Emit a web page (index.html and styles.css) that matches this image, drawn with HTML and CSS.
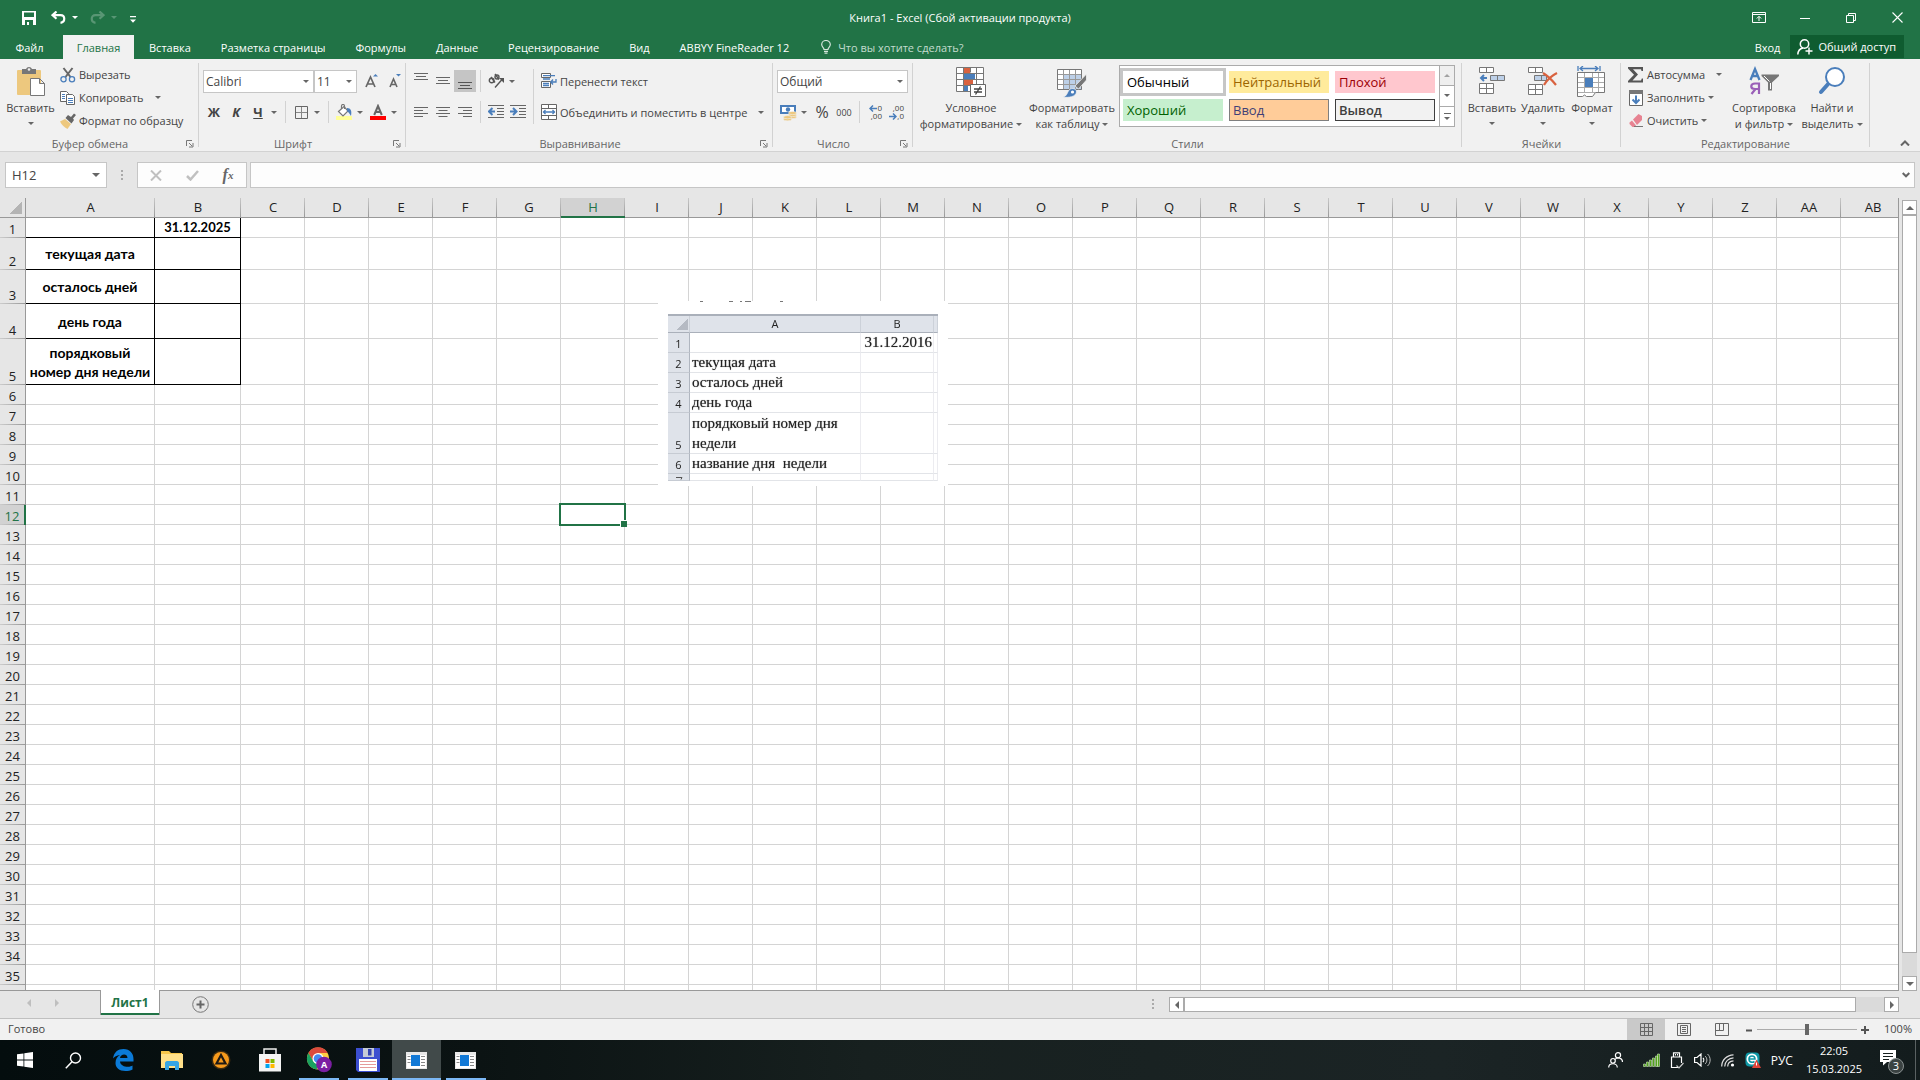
FILE: index.html
```html
<!DOCTYPE html>
<html lang="ru">
<head>
    <meta charset="UTF-8">
    <meta name="viewport" content="width=device-width, initial-scale=1.0">
    <title>Книга1 - Excel</title>
    <link rel="stylesheet" href="styles.css">
</head>
<body>
    <header class="titlebar">
        <div class="quick">
            <button class="quick-btn" aria-label="Сохранить"><svg width="14" height="14" viewBox="0 0 14 14"><path fill="#fff" fill-rule="evenodd" d="M0 0h14v14H0zM2 1.500v4.500h10V1.500zM3 9v5h2v-3h2v3h4V9z"/></svg></button>
            <button class="quick-btn" aria-label="Отменить"><svg width="15" height="13" viewBox="0 0 15 13"><path fill="none" stroke="#fff" stroke-width="2.200" d="M5.500 0.500L1.500 4.200l4 3.600M2 4.200h7.500c5 0 5 7 0 7.600"/></svg></button>
            <span class="caret light"></span>
            <button class="quick-btn faded" aria-label="Вернуть"><svg width="15" height="13" viewBox="0 0 15 13"><path fill="none" stroke="#fff" stroke-width="2.200" d="M9.500 0.500l4 3.700-4 3.600M13 4.200H5.500c-5 0-5 7 0 7.600"/></svg></button>
            <span class="caret light faded"></span>
            <button class="quick-btn custom" aria-label="Настройка панели"><svg width="6" height="7" viewBox="0 0 6 7"><path fill="#fff" d="M0 0h6v1.300H0zM0 3.500h6L3 6.800z"/></svg></button>
        </div>
        <h1 class="title">Книга1 - Excel (Сбой активации продукта)</h1>
        <div class="window-buttons">
            <button aria-label="Параметры ленты"><svg width="14" height="11" viewBox="0 0 14 11"><path fill="none" stroke="#fff" d="M.5.5h13v10H.5zM.5 2.500h13M7 9V4.500M4.800 6.500L7 4.300l2.200 2.200"/></svg></button>
            <button aria-label="Свернуть"><svg width="10" height="10" viewBox="0 0 10 10"><path stroke="#fff" d="M0 5.500h10"/></svg></button>
            <button aria-label="Восстановить"><svg width="10" height="10" viewBox="0 0 10 10"><path fill="none" stroke="#fff" d="M.5 2.500h7v7h-7zM2.500 2.500v-2h7v7h-2"/></svg></button>
            <button aria-label="Закрыть"><svg width="11" height="11" viewBox="0 0 11 11"><path stroke="#fff" stroke-width="1.100" d="M.5.5l10 10M10.500.5l-10 10"/></svg></button>
        </div>
    </header>

    <nav class="tabs">
        <button class="tab file">Файл</button>
        <button class="tab active">Главная</button>
        <button class="tab">Вставка</button>
        <button class="tab">Разметка страницы</button>
        <button class="tab">Формулы</button>
        <button class="tab">Данные</button>
        <button class="tab">Рецензирование</button>
        <button class="tab">Вид</button>
        <button class="tab">ABBYY FineReader 12</button>
        <button class="tell-me"><svg width="10" height="14" viewBox="0 0 10 14"><path fill="none" stroke="#d5e6dc" stroke-width="1.200" d="M3 9.500C3 7.500.700 7 .700 4.500a4.300 4 0 0 1 8.600 0C9.300 7 7 7.500 7 9.500zM3 11.300h4M3.500 13.200h3"/></svg>Что вы хотите сделать?</button>
        <button class="login">Вход</button>
        <button class="share"><svg width="16" height="16" viewBox="0 0 16 16"><circle cx="7.500" cy="5" r="4.200" fill="none" stroke="#fff" stroke-width="1.500"/><path fill="none" stroke="#fff" stroke-width="1.500" d="M.8 15.500C1 11.500 3.500 9.500 6 9M12 8.500v7M8.500 12h7"/></svg>Общий доступ</button>
    </nav>

    <section class="ribbon">
        <div class="group clipboard">
            <div class="group-body">
                <button class="big paste">
                    <svg width="30" height="32" viewBox="0 0 30 32"><rect x="1" y="4" width="24" height="25" rx="1" fill="#edc87e"/><path fill="#777" d="M6 3h4a3.200 3.200 0 0 1 6 0h4v5H6z"/><circle cx="13" cy="3.500" r="1.300" fill="#f1f1f1"/><path fill="#fff" stroke="#777" d="M14.500 12.500h9l5 5v12h-14zM23.500 12.500v5h5"/></svg>
                    <span>Вставить</span><span class="caret"></span>
                </button>
                <div class="small-list">
                    <button class="small"><svg width="16" height="16" viewBox="0 0 16 16"><path fill="none" stroke="#666" stroke-width="2" d="M3.500 1l7 9M12.500 1l-7 9"/><circle cx="3.500" cy="12.200" r="2.600" fill="none" stroke="#4a7ebb" stroke-width="1.300"/><circle cx="12" cy="12.200" r="2.600" fill="none" stroke="#4a7ebb" stroke-width="1.300"/></svg>Вырезать</button>
                    <button class="small"><svg width="16" height="16" viewBox="0 0 16 16"><path fill="#fff" stroke="#666" d="M.5 1.500h6l2 2v8h-8z"/><path fill="#fff" stroke="#666" d="M6.500 4.500h6l2 2v8h-8z"/><path stroke="#4a7ebb" d="M2 4.500h3M2 6.500h3M2 8.500h3M8 8.500h5M8 10.500h5M8 12.500h5"/></svg>Копировать<span class="caret apart"></span></button>
                    <button class="small"><svg width="16" height="16" viewBox="0 0 16 16"><path fill="#edc87e" d="M0 8.500l5-2.500 6 5-3.500 5C4 14 1.500 12 0 8.500z"/><path fill="#666" d="M5.500 5l2.500-3 3 2 3-3.500 2 1.500-3 3.500 1 1.500-2.500 3.500z"/></svg>Формат по образцу</button>
                </div>
            </div>
            <div class="group-name"><span>Буфер обмена</span><svg class="launcher" width="8" height="8"><use href="#launcher"/></svg></div>
        </div>

        <div class="group font">
            <div class="group-body rows">
                <div class="row">
                    <label class="combo family"><select aria-label="Шрифт"><option>Calibri</option></select><span class="caret"></span></label>
                    <label class="combo size"><select aria-label="Размер шрифта"><option>11</option></select><span class="caret"></span></label>
                    <button class="mini grow" aria-label="Увеличить размер"><svg width="16" height="16" viewBox="0 0 16 16"><path fill="none" stroke="#666" stroke-width="1.700" d="M1 14L5.500 4l4.500 10M2.600 11h6"/><path fill="#4a7ebb" d="M8 3.500h5L10.500 1z"/></svg></button>
                    <button class="mini" aria-label="Уменьшить размер"><svg width="16" height="16" viewBox="0 0 16 16"><path fill="none" stroke="#666" stroke-width="1.600" d="M3 14l3.500-8L10 14M4.300 11.500h4.500"/><path fill="#4a7ebb" d="M9 1h5l-2.500 2.500z"/></svg></button>
                </div>
                <div class="row">
                    <button class="mini bold">Ж</button>
                    <button class="mini bold italic">К</button>
                    <button class="mini bold underline">Ч</button><button class="drop" aria-label="Подчеркивание"><span class="caret"></span></button>
                    <span class="sep"></span>
                    <button class="mini" aria-label="Границы"><svg width="13" height="13" viewBox="0 0 13 13"><path fill="none" stroke="#666" d="M.5.500h12v12H.5z"/><path stroke="#888" d="M6.500 1v11M1 6.500h11"/></svg></button><button class="drop" aria-label="Виды границ"><span class="caret"></span></button>
                    <span class="sep"></span>
                    <button class="mini" aria-label="Цвет заливки"><svg width="16" height="16" viewBox="0 0 16 16"><path fill="#ffff99" d="M0 12h16v4H0z"/><path fill="#fff" stroke="#777" stroke-width="1.200" d="M2.500 7.500L8 2.500l4 4.500-5 5z"/><path fill="none" stroke="#777" stroke-width="1.200" d="M5.500 5V2c0-2 3-2 3 0v3"/><path fill="#4a7ebb" d="M11 4c4 0 5 3 4 8-1-2-2-3-4-5z"/></svg></button><button class="drop" aria-label="Заливка"><span class="caret"></span></button>
                    <button class="mini color" aria-label="Цвет текста"><svg width="16" height="16" viewBox="0 0 16 16"><path fill="red" d="M0 12h16v4H0z"/><path fill="none" stroke="#666" stroke-width="2" d="M4.200 11L8 2l3.800 9M5.500 8h5"/></svg></button><button class="drop" aria-label="Цвета текста"><span class="caret"></span></button>
                </div>
            </div>
            <div class="group-name"><span>Шрифт</span><svg class="launcher" width="8" height="8"><use href="#launcher"/></svg></div>
        </div>

        <div class="group align">
            <div class="group-body">
                <div class="rows">
                    <div class="row">
                        <button class="mini" aria-label="По верхнему краю"><svg width="14" height="16" viewBox="0 0 14 16"><path stroke="#666" d="M0 .5h14M2 3.500h10M0 6.500h14"/></svg></button>
                        <button class="mini" aria-label="По середине"><svg width="14" height="16" viewBox="0 0 14 16"><path stroke="#666" d="M0 4.500h14M2 7.500h10M0 10.500h14"/></svg></button>
                        <button class="mini pressed" aria-label="По нижнему краю"><svg width="14" height="16" viewBox="0 0 14 16"><path stroke="#555" d="M0 9.500h14M2 12.500h10M0 15.500h14"/></svg></button>
                        <span class="sep near"></span>
                        <button class="mini" aria-label="Ориентация"><svg width="16" height="16" viewBox="0 0 16 16"><g fill="none" stroke="#555" stroke-width="1.400"><circle cx="3.600" cy="7.500" r="2.300"/><path d="M3 4l4 5.500M7 1l4 5.500M7 14.500L14.500 6"/><circle cx="9" cy="4" r="2"/></g><path fill="#555" d="M11 5h5v5z"/></svg></button><button class="drop" aria-label="Поворот"><span class="caret"></span></button>
                    </div>
                    <div class="row">
                        <button class="mini" aria-label="По левому краю"><svg width="14" height="13" viewBox="0 0 14 13"><path stroke="#666" d="M0 1.500h14M0 4.500h9M0 7.500h14M0 10.500h9"/></svg></button>
                        <button class="mini" aria-label="По центру"><svg width="14" height="13" viewBox="0 0 14 13"><path stroke="#666" d="M0 1.500h14M2.500 4.500h9M0 7.500h14M2.500 10.500h9"/></svg></button>
                        <button class="mini" aria-label="По правому краю"><svg width="14" height="13" viewBox="0 0 14 13"><path stroke="#666" d="M0 1.500h14M5 4.500h9M0 7.500h14M5 10.500h9"/></svg></button>
                        <span class="sep near"></span>
                        <button class="mini" aria-label="Уменьшить отступ"><svg width="16" height="14" viewBox="0 0 16 14"><path stroke="#666" d="M0 .5h16M9 3.500h7M9 6.500h7M9 9.500h7M0 12.500h16"/><path fill="none" stroke="#4a7ebb" stroke-width="2" d="M7 6.500H1.500M4.500 3L1 6.500 4.500 10"/></svg></button>
                        <button class="mini" aria-label="Увеличить отступ"><svg width="16" height="14" viewBox="0 0 16 14"><path stroke="#666" d="M0 .5h16M9 3.500h7M9 6.500h7M9 9.500h7M0 12.500h16"/><path fill="none" stroke="#4a7ebb" stroke-width="2" d="M0 6.500h5.500M3 3l3.500 3.500L3 10"/></svg></button>
                    </div>
                </div>
                <span class="sep tall"></span>
                <div class="rows">
                    <button class="small wide"><svg width="16" height="16" viewBox="0 0 16 16"><path fill="#fff" stroke="#666" d="M.5.500h9v4h-9zM.5 8.500h9v6h-9z"/><path stroke="#4a7ebb" stroke-width="1.300" fill="none" d="M2 2.700h12M2 6h7M2 10.500h6M2 12.500h6M15 6v3h-5M12 6.500L9.800 9l2.200 2.500"/></svg>Перенести текст</button>
                    <button class="small wide"><svg width="16" height="16" viewBox="0 0 16 16"><path fill="#fff" stroke="#666" d="M.5.500h15v15H.5zM.5 4.500h15M.5 11.500h15M7.500.500v4M7.500 11.500v4"/><path fill="none" stroke="#4a7ebb" stroke-width="1.300" d="M2 8h12M4.500 6L2.500 8l2 2M11.500 6l2 2-2 2"/></svg>Объединить и поместить в центре<span class="caret apart"></span></button>
                </div>
            </div>
            <div class="group-name"><span>Выравнивание</span><svg class="launcher" width="8" height="8"><use href="#launcher"/></svg></div>
        </div>

        <div class="group number">
            <div class="group-body rows">
                <div class="row">
                    <label class="combo format"><select aria-label="Числовой формат"><option>Общий</option></select><span class="caret"></span></label>
                </div>
                <div class="row">
                    <button class="mini" aria-label="Финансовый формат"><svg width="17" height="17" viewBox="0 0 17 17"><path fill="#fff" stroke="#4a7ebb" stroke-width="2" d="M1 2h14v7H1z"/><circle cx="8" cy="5.500" r="2.200" fill="#4a7ebb"/><g fill="#edc87e" stroke="#f1f1f1" stroke-width=".6"><ellipse cx="12.500" cy="13" rx="4" ry="1.600"/><ellipse cx="12.500" cy="11" rx="4" ry="1.600"/><ellipse cx="12.500" cy="9" rx="4" ry="1.600"/><ellipse cx="7.500" cy="15.200" rx="4" ry="1.600"/><ellipse cx="7.500" cy="13.200" rx="4" ry="1.600"/></g></svg></button><button class="drop" aria-label="Валюта"><span class="caret"></span></button>
                    <button class="mini percent">%</button>
                    <button class="mini zeros">000</button>
                    <span class="sep near"></span>
                    <button class="mini decimals" aria-label="Увеличить разрядность"><span class="dec-row"><svg width="8" height="7" viewBox="0 0 8 7"><path fill="none" stroke="#4a7ebb" stroke-width="1.500" d="M8 3.500H1M4 .5l-3 3 3 3"/></svg>0</span><span class="dec-row">,00</span></button>
                    <button class="mini decimals" aria-label="Уменьшить разрядность"><span class="dec-row">,00</span><span class="dec-row"><svg width="8" height="7" viewBox="0 0 8 7"><path fill="none" stroke="#4a7ebb" stroke-width="1.500" d="M0 3.500h7M4 .5l3 3-3 3"/></svg>,0</span></button>
                </div>
            </div>
            <div class="group-name"><span>Число</span><svg class="launcher" width="8" height="8"><use href="#launcher"/></svg></div>
        </div>

        <div class="group styles">
            <div class="group-body">
                <button class="big cond">
                    <svg width="30" height="32" viewBox="0 0 30 32"><path fill="#fff" d="M0 1h28v24H0z"/><path fill="#d9623f" d="M8 1h6v6H8zM8 13h9v6H8z"/><path fill="#4a7ebb" d="M8 7h11v6H8zM8 19h4v6H8z"/><path fill="none" stroke="#777" d="M.5 1.500h27v24H.5zM.5 7.500h27M.5 13.500h27M.5 19.500h27M7.500 1.500v24M20.500 1.500v24M14.500 1.500v5"/><path fill="#fff" stroke="#666" d="M14.500 18.500h15v12h-15z"/><path fill="none" stroke="#444" stroke-width="1.300" d="M18 23h8M18 26h8M24.500 20.500l-5 8"/></svg>
                    <span>Условное</span><span class="line">форматирование<span class="caret"></span></span>
                </button>
                <button class="big table">
                    <svg width="30" height="32" viewBox="0 0 30 32"><path fill="#fff" d="M0 4h25v20H0z"/><path fill="#bdd0e8" d="M7 9h18v15H7z"/><path fill="none" stroke="#999" d="M.5 8.500h24M.5 13.500h24M.5 18.500h24M6.500 3.500v20M12.500 3.500v20M18.500 3.500v20"/><path fill="none" stroke="#777" d="M.5 3.500h24v20H.5z"/><path fill="#777" d="M29.500 8v6l-8 9-3.500-3z" stroke="#f1f1f1" stroke-width=".8"/><path fill="#4a7ebb" stroke="#f1f1f1" stroke-width=".8" d="M6 31c4-1 4-4 6-7 3-3 8-1 7.500 2C19 31 11 32 6 31z"/><circle cx="15.500" cy="26" r="1.600" fill="#fff"/></svg>
                    <span>Форматировать</span><span class="line">как таблицу<span class="caret"></span></span>
                </button>
                <div class="gallery">
                    <div class="swatches">
                        <button class="swatch normal">Обычный</button>
                        <button class="swatch neutral">Нейтральный</button>
                        <button class="swatch bad">Плохой</button>
                        <button class="swatch good">Хороший</button>
                        <button class="swatch input">Ввод</button>
                        <button class="swatch output">Вывод</button>
                    </div>
                    <div class="gallery-scroll">
                        <button class="off" aria-label="Вверх"><span class="caret up"></span></button>
                        <button aria-label="Вниз"><span class="caret"></span></button>
                        <button class="more" aria-label="Еще"><span class="caret"></span></button>
                    </div>
                </div>
            </div>
            <div class="group-name"><span>Стили</span></div>
        </div>

        <div class="group cells">
            <div class="group-body">
                <button class="big insert">
                    <svg width="28" height="32" viewBox="0 0 28 32"><path fill="#fff" stroke="#777" d="M1.500 1.500h14v5h-14zM8.500 1.500v5M1.500 17.500h14v10h-14zM8.500 17.500v10M1.500 22.500h14"/><path fill="#bdd0e8" stroke="#777" d="M12.500 9.500h14v5h-14zM19.500 9.500v5"/><path fill="none" stroke="#4a7ebb" stroke-width="2" d="M9 12H3M6 9l-3 3 3 3"/></svg>
                    <span>Вставить</span><span class="caret"></span>
                </button>
                <button class="big delete">
                    <svg width="30" height="32" viewBox="0 0 30 32"><path fill="#fff" stroke="#777" d="M.5 1.500h14v5H.5zM7.500 1.500v5M.5 18.500h14v10H.5zM7.500 18.500v10M.5 23.500h14"/><path fill="#bdd0e8" stroke="#777" d="M6.500 9.500h12v5h-12zM13.500 9.500v5"/><path fill="none" stroke="#d9623f" stroke-width="2.200" d="M15 7c5 3 9 7 13 12M29 7c-6 3-10 7-13 12"/></svg>
                    <span>Удалить</span><span class="caret"></span>
                </button>
                <button class="big format">
                    <svg width="30" height="32" viewBox="0 0 30 32"><path fill="none" stroke="#4a7ebb" stroke-width="1.300" d="M1 0v5M23 0v5M3 2.500h18M6 0L3 2.500 6 5M18 0l3 2.500L18 5"/><path fill="#fff" stroke="#777" d="M.5 6.500h27v20h-9l-3 4h-6l-2-1.500-2 1.500h-5z"/><path fill="none" stroke="#aaa" d="M1 11.500h26M1 21.500h26M7.500 7v20M15.500 7v20M21.500 7v19M1 16.500h26M1 26.500h17"/><path fill="#4a7ebb" d="M8 12h8v9H8z"/></svg>
                    <span>Формат</span><span class="caret"></span>
                </button>
            </div>
            <div class="group-name"><span>Ячейки</span></div>
        </div>

        <div class="group editing">
            <div class="group-body">
                <div class="small-list">
                    <button class="small"><svg width="16" height="16" viewBox="0 0 16 16"><path fill="#555" d="M0 0h15v4h-1.500l-.5-1.700H5l5 5.200-5.500 6H13l.8-2H15V15.500H0V14l6-6.300L0 1.500z"/></svg>Автосумма<span class="caret apart"></span></button>
                    <button class="small"><svg width="16" height="16" viewBox="0 0 16 16"><path fill="#fff" stroke="#666" d="M1.500.5h13v15h-13z"/><path fill="#777" d="M1 0h14v4H1z"/><path fill="none" stroke="#4a7ebb" stroke-width="2" d="M8 5.500v8M4.500 9.500L8 13l3.500-3.500"/></svg>Заполнить<span class="caret"></span></button>
                    <button class="small"><svg width="16" height="16" viewBox="0 0 16 16"><path fill="#e78392" d="M5 6.500L10.500 1l3.500 2v4l-5 5z"/><path fill="#e78392" d="M4 7.500l4 5-1.500 1.500h-2L1.500 11V9.500z"/><path stroke="#777" d="M6 13.500h9"/></svg>Очистить<span class="caret"></span></button>
                </div>
                <button class="big sort">
                    <svg width="30" height="32" viewBox="0 0 30 32"><path fill="none" stroke="#4a7ebb" stroke-width="2.300" d="M1.500 14L6 3l4.500 11M3 10h6"/><path fill="none" stroke="#9a5fb8" stroke-width="2.200" d="M10 28V17.500H6c-5 0-5 5.500 0 5.500h4M6.500 23L2.500 28"/><path fill="#777" d="M12.500 8.500H30v1.500l-7 6.500v8h-4v-8l-6.500-6.500z"/><path stroke="#fff" d="M21.500 17v6M15 10l5.500 5.500"/></svg>
                    <span>Сортировка</span><span class="line">и фильтр<span class="caret"></span></span>
                </button>
                <button class="big find">
                    <svg width="30" height="32" viewBox="0 0 30 32"><path stroke="#4a7ebb" stroke-width="4" stroke-linecap="round" d="M4 26l8-9"/><circle cx="18" cy="11" r="9" fill="#fff" stroke="#4a7ebb" stroke-width="2"/></svg>
                    <span>Найти и</span><span class="line">выделить<span class="caret"></span></span>
                </button>
            </div>
            <div class="group-name"><span>Редактирование</span></div>
        </div>
        <button class="collapse" aria-label="Свернуть ленту"><svg width="10" height="6" viewBox="0 0 10 6"><path fill="none" stroke="#666" stroke-width="2" d="M1 5.500l4-4 4 4"/></svg></button>
    </section>

    <section class="formula-bar">
        <div class="name-box"><input type="text" value="H12" aria-label="Имя"><span class="caret wide"></span></div>
        <span class="dots"></span>
        <div class="formula-buttons">
            <button aria-label="Отмена"><svg width="12" height="11" viewBox="0 0 12 11"><path stroke="#c0c0c0" stroke-width="2" d="M1 .5l10 10M11 .5l-10 10"/></svg></button>
            <button aria-label="Ввод"><svg width="13" height="11" viewBox="0 0 13 11"><path fill="none" stroke="#c0c0c0" stroke-width="2.500" d="M1 6l3.500 3.500L12 1"/></svg></button>
            <button class="fx" aria-label="Вставить функцию"><i>f</i><sub>x</sub></button>
        </div>
        <div class="formula"><input type="text" aria-label="Строка формул"><svg width="8" height="6" viewBox="0 0 8 6"><path fill="none" stroke="#666" stroke-width="2" d="M.7 1L4 4.300 7.300 1"/></svg></div>
    </section>

    <main class="workspace">
        <div class="sheet">
            <table class="grid" id="grid"></table>
            <div class="picture">
                <svg class="scraps" width="90" height="2" viewBox="0 0 90 2"><path stroke="#777" d="M2 .5h3M31 .5h4M42 .5h2M47 .5h6M82 .5h3"/></svg>
                <div class="picture-page">
                    <div class="p-bar"></div>
                    <table class="p-table">
                        <tr class="p-head"><th><span class="corner-mark"></span></th><th>A</th><th>B</th><th></th></tr>
                        <tr><th>1</th><td></td><td class="p-date">31.12.2016</td><td></td></tr>
                        <tr><th>2</th><td>текущая дата</td><td></td><td></td></tr>
                        <tr><th>3</th><td>осталось дней</td><td></td><td></td></tr>
                        <tr><th>4</th><td>день года</td><td></td><td></td></tr>
                        <tr><th>5</th><td>порядковый номер дня недели</td><td></td><td></td></tr>
                        <tr><th>6</th><td>название дня&nbsp; недели</td><td></td><td></td></tr>
                        <tr class="p-last"><th><svg width="22" height="3" viewBox="0 0 22 3"><path fill="none" stroke="#555" d="M8 .5h6l-1 2"/></svg></th><td></td><td></td><td></td></tr>
                    </table>
                </div>
            </div>
        </div>
        <div class="vscroll">
            <button aria-label="Прокрутить вверх"><span class="caret up wide"></span></button>
            <div class="track"><div class="thumb"></div></div>
            <button aria-label="Прокрутить вниз"><span class="caret wide"></span></button>
        </div>
    </main>

    <section class="sheet-tabs">
        <div class="sheet-nav">
            <button aria-label="Назад"><span class="side left"></span></button>
            <button aria-label="Вперед"><span class="side right"></span></button>
        </div>
        <button class="sheet-tab">Лист1</button>
        <button class="add-sheet" aria-label="Новый лист"><svg width="17" height="17" viewBox="0 0 17 17"><circle cx="8.500" cy="8.500" r="7.800" fill="none" stroke="#777"/><path stroke="#666" stroke-width="2" d="M8.500 4.500v8M4.500 8.500h8"/></svg></button>
        <span class="dots"></span>
        <div class="hscroll">
            <button aria-label="Прокрутить влево"><span class="side left"></span></button>
            <div class="track"><div class="thumb"></div></div>
            <button aria-label="Прокрутить вправо"><span class="side right"></span></button>
        </div>
    </section>

    <footer class="status">
        <span class="ready">Готово</span>
        <button class="view active" aria-label="Обычный"><svg width="13" height="13" viewBox="0 0 13 13"><path fill="none" stroke="#666" d="M.5.500h12v12H.5zM4.500.500v12M8.500.500v12M.5 4.500h12M.5 8.500h12"/></svg></button>
        <button class="view" aria-label="Разметка страницы"><svg width="14" height="13" viewBox="0 0 14 13"><path fill="none" stroke="#666" d="M.5.500h13v12H.5zM3.500 2.500h7v8h-7zM5 4.500h4M5 6.500h4M5 8.500h4"/></svg></button>
        <button class="view" aria-label="Страничный режим"><svg width="14" height="13" viewBox="0 0 14 13"><path fill="none" stroke="#666" d="M.5.500h13v12H.5zM4.500.500v7M8.500.500v7M.5 7.500h8"/></svg></button>
        <button class="zoom-btn" aria-label="Уменьшить"><svg width="8" height="8" viewBox="0 0 8 8"><path stroke="#555" stroke-width="2" d="M1 4.500h6"/></svg></button>
        <input class="zoom" type="range" min="0" max="100" value="50" aria-label="Масштаб">
        <button class="zoom-btn" aria-label="Увеличить"><svg width="8" height="8" viewBox="0 0 8 8"><path stroke="#555" stroke-width="2" d="M0 4h8M4 0v8"/></svg></button>
        <span class="percent-value">100%</span>
    </footer>

    <div class="taskbar">
        <button class="task" aria-label="Пуск"><svg width="16" height="16" viewBox="0 0 16 16"><path fill="#fff" d="M0 2.300L6.500 1.400v6.200H0zM7.300 1.300L16 0v7.600H7.300zM0 8.400h6.500v6.200L0 13.700zM7.300 8.400H16V16l-8.700-1.300z"/></svg></button>
        <button class="task" aria-label="Поиск"><svg width="17" height="17" viewBox="0 0 17 17"><circle cx="10.500" cy="6" r="5" fill="none" stroke="#fff" stroke-width="1.400"/><path stroke="#fff" stroke-width="1.500" d="M7 9.800L.8 16.300"/></svg></button>
        <button class="task" aria-label="Edge"><svg width="22" height="22" viewBox="0 0 22 22"><path fill="#0b7ad7" d="M1 9.500C2 3 6 0 11.500 0 18 0 21.500 4.500 21.500 10v2.500H8c.3 4 5 5.500 8 5.300 2-.1 3.500-.7 4.500-1.300v4c-2 1-4.500 1.500-7 1.500C7 22 3.500 18.500 3.500 14c0-4 2-6.500 4.500-8C4.500 6.500 2.500 7.500 1 9.500zM8 9h7.500c0-5-7-4.500-7.500 0z"/></svg></button>
        <button class="task" aria-label="Проводник"><svg width="22" height="20" viewBox="0 0 22 20"><path fill="#f7c64b" d="M0 1h8l2 2h11v4H0z"/><path fill="#ffe08a" d="M0 4h22v14H0z"/><path fill="#35a5e5" d="M4 20v-7c0-1 1-2 2-2h10c1 0 2 1 2 2v7h-4v-4H8v4z"/></svg></button>
        <button class="task" aria-label="AIMP"><svg width="20" height="20" viewBox="0 0 20 20"><circle cx="10" cy="10" r="9.500" fill="#3b2a10"/><circle cx="10" cy="10" r="8" fill="#f79a1c"/><path fill="none" stroke="#201a14" stroke-width="2.200" d="M5.500 13.500L10 5l4.500 8.500z"/></svg></button>
        <button class="task" aria-label="Store"><svg width="24" height="24" viewBox="0 0 24 24"><path fill="none" stroke="#eee" stroke-width="1.500" d="M6 8V1h12v7"/><path fill="#f4f4f4" d="M1 6h22v17.500H1z"/><path fill="#f25022" d="M7.500 11h4v4h-4z"/><path fill="#7fba00" d="M12.500 11h4v4h-4z"/><path fill="#00a4ef" d="M7.500 16h4v4h-4z"/><path fill="#ffb900" d="M12.500 16h4v4h-4z"/></svg></button>
        <button class="task open" aria-label="Chrome"><svg width="26" height="26" viewBox="0 0 26 26"><circle cx="12" cy="11.500" r="11" fill="#ffcd41"/><path fill="#dc4a3d" d="M2.400 6A11 11 0 0 1 21.600 6H12l-5 8z"/><path fill="#1aa260" d="M2.400 6l5 8.500L13 17l-2.500 5.500A11 11 0 0 1 2.400 6z"/><circle cx="12" cy="11.500" r="5.500" fill="#fff"/><circle cx="12" cy="11.500" r="4.300" fill="#4688f1"/><circle cx="18" cy="17.500" r="7.800" fill="#7b1fa2"/><text x="18" y="21" font-size="9" font-weight="700" text-anchor="middle" fill="#fff">A</text></svg></button>
        <button class="task open" aria-label="Сохранение"><svg width="24" height="24" viewBox="0 0 24 24"><path fill="#3c4fd0" d="M0 0h24v24H2l-2-2z"/><path fill="#c5cbd6" d="M7 0h11v9H7z"/><path fill="#3343b0" d="M12 1h3.500v6.500H12z"/><path fill="#fff" d="M3 11h18v12H3z"/><path stroke="#e59a9a" d="M4 13.500h16M4 16.500h16M4 19.500h16"/></svg></button>
        <button class="task open current" aria-label="Excel"><svg width="21" height="17" viewBox="0 0 21 17"><use href="#win"/></svg></button>
        <button class="task open" aria-label="Окно"><svg width="21" height="17" viewBox="0 0 21 17"><use href="#win"/></svg></button>

        <div class="tray">
            <button class="people" aria-label="Люди"><svg width="15" height="16" viewBox="0 0 15 16"><g fill="none" stroke="#fff" stroke-width="1.200"><circle cx="10" cy="3.200" r="2.600"/><path d="M14.500 10c0-2.500-2-4-4.500-4-1.500 0-2.500.6-3 1.500"/><circle cx="5" cy="8.800" r="2.300"/><path d="M.7 15.500c0-5 8.600-5 8.600 0"/></g></svg></button>
            <button aria-label="Сигнал"><svg width="17" height="14" viewBox="0 0 17 14"><path fill="#54a51c" stroke="#cfe8bd" stroke-width=".6" d="M.5 11h2v2.500h-2zM3.500 9h2v4.500h-2zM6.500 7h2v6.500h-2zM9.500 5h2v8.500h-2zM12.500 3h2v10.500h-2zM14.500 1h2v12.500h-2z"/></svg></button>
            <button aria-label="USB"><svg width="14" height="17" viewBox="0 0 14 17"><path fill="none" stroke="#fff" stroke-width="1.200" d="M3.500 5V.8h6V5M8 15.500H1.500V5h10v6"/><path stroke="#fff" d="M5.500 2v1.500M7.500 2v1.500"/><path fill="none" stroke="#ccc" stroke-width="1.200" d="M6.500 13.500l2.500 2.500 4.500-5"/></svg></button>
            <button aria-label="Громкость"><svg width="17" height="14" viewBox="0 0 17 14"><path fill="none" stroke="#fff" stroke-width="1.200" d="M.6 4.500H3L7 1v12L3 9.500H.6zM9 5c1 1 1 3 0 4"/><path fill="none" stroke="#bbb" d="M11 3c2.500 2 2.500 6 0 8M13.500 1c3.500 3 3.500 9 0 12"/></svg></button>
            <button aria-label="Сеть"><svg width="14" height="13" viewBox="0 0 14 13"><g fill="none" stroke="#ddd" stroke-width="1.200"><path d="M.7 12.500C.7 6 6 1 12.500.8M3.700 12.500c0-5 4-8.500 8.800-8.700M6.700 12.500c0-3.500 2.500-5.500 5.800-5.700"/></g><circle cx="11.500" cy="11" r="1.600" fill="#fff"/></svg></button>
            <button aria-label="ESET"><svg width="16" height="16" viewBox="0 0 16 16"><rect width="14" height="14" x=".5" y=".5" rx="4" fill="#0e98a6"/><circle cx="7" cy="7" r="5.500" fill="#fff"/><path fill="none" stroke="#0e98a6" stroke-width="1.600" d="M4 7h6c0-4-6-4-6 0s4 3.500 5.500 2.500"/><path fill="#e0443a" d="M11.500 7.500L16 16H7z"/><path stroke="#fff" d="M11.500 10.500v3"/></svg></button>
            <button class="lang">РУС</button>
            <button class="clock"><span>22:05</span><span>15.03.2025</span></button>
            <button class="notify" aria-label="Уведомления"><svg width="24" height="24" viewBox="0 0 24 24"><path fill="#fff" d="M0 0h16v12H7l-4 3.500V12H0z"/><path stroke="#18201f" d="M3 3.500h10M3 6.500h10M3 9.500h6"/><circle cx="16" cy="16" r="7.500" fill="#3a4242" stroke="#8b9292"/><text x="16" y="20" font-size="11" text-anchor="middle" fill="#fff">3</text></svg></button>
        </div>
    </div>

    <svg class="defs" width="0" height="0">
        <symbol id="launcher" viewBox="0 0 8 8"><path fill="none" stroke="#777" d="M.5 6V.5H6M3 3l3 3M7 3v4H3"/></symbol>
        <symbol id="win" viewBox="0 0 21 17"><path fill="#e8e8e8" d="M0 0h21v17H0z"/><path fill="#fff" d="M1 3h19v13H1z"/><path fill="#1279d6" d="M5 3h9v11H5z"/><path stroke="#888" d="M1.500 4.500h3M1.500 7.500h3M1.500 10.500h3M15 4.500h4M15 7.500h4M15 10.500h4M15 13.500h4"/></symbol>
    </svg>
    <script src="script.js"></script>
</body>
</html>
```
FILE: styles.css
```css
* {
    box-sizing: border-box;
}

body {
    display: flex;
    flex-direction: column;
    height: 100vh;
    margin: 0;
    overflow: hidden;
    background-color: #e6e6e6;
    color: #444;
    font-family: "Open Sans", "Noto Sans", sans-serif;
    font-size: 11px;
}

button {
    display: flex;
    align-items: center;
    justify-content: center;
    padding: 0;
    border: none;
    background: none;
    color: inherit;
    font: inherit;
    white-space: nowrap;
}

input,
select {
    border: none;
    outline: none;
    color: inherit;
    font: inherit;
}

svg {
    display: block;
    flex: none;
}

.defs {
    position: absolute;
}

.caret {
    width: 0;
    height: 0;
    flex: none;
    border: 3px solid transparent;
    border-top-color: #666;
    border-bottom: none;
}

.caret.up {
    border-top: none;
    border-bottom: 3px solid #666;
}

.caret.wide {
    border-left-width: 4px;
    border-right-width: 4px;
    border-top-width: 4px;
}

.caret.up.wide {
    border-top-width: 0;
    border-bottom-width: 4px;
}

.caret.light {
    border-top-color: #fff;
}

.caret.apart {
    margin-left: 8px;
}

.faded {
    opacity: 0.25;
}

/* title bar */
.titlebar {
    display: grid;
    grid-template-columns: 1fr auto 1fr;
    align-items: center;
    height: 35px;
    flex: none;
    background-color: #217346;
    color: #fff;
}

.quick {
    display: flex;
    align-items: center;
    padding-left: 22px;
}

.quick-btn {
    margin-right: 6px;
}

.quick-btn:first-child {
    margin-right: 15px;
}

.quick .caret {
    margin-right: 12px;
}

.quick .custom {
    margin: 4px 0 0 1px;
}

.title {
    margin: 0;
    font-size: 11px;
    font-weight: 400;
}

.window-buttons {
    display: flex;
    justify-content: flex-end;
}

.window-buttons button {
    width: 46px;
}

/* ribbon tabs */
.tabs {
    display: flex;
    height: 24px;
    flex: none;
    padding-right: 16px;
    background-color: #217346;
    color: #fff;
}

.tab {
    padding: 0 15px;
}

.tab.file {
    width: 63px;
    padding: 0 4px 0 0;
}

.tab.active {
    width: 71px;
    padding: 0;
    background-color: #f1f1f1;
    color: #217346;
}

.tell-me {
    gap: 7px;
    margin-left: 17px;
    color: #c3dccf;
}

.login {
    margin-left: auto;
    margin-right: 10px;
}

.share {
    gap: 5px;
    height: 23px;
    padding: 0 8px 0 7px;
    background-color: #0f5c30;
}

/* ribbon */
.ribbon {
    display: flex;
    height: 93px;
    flex: none;
    padding-top: 4px;
    border-bottom: 1px solid #d2d2d2;
    background-color: #f1f1f1;
}

.group {
    display: flex;
    flex-direction: column;
    flex: none;
    padding-left: 4px;
    background: linear-gradient(#d2d2d2, #d2d2d2) right top / 1px 84px no-repeat;
}

.group-body {
    display: flex;
    height: 72px;
    flex: none;
}

.group-name {
    display: flex;
    align-items: center;
    height: 16px;
    margin-left: -4px;
    color: #666;
}

.group-name span {
    flex: 1;
    text-align: center;
}

.launcher {
    margin: 2px 5px 0 6px;
}

.clipboard { width: 199px; }
.font { width: 207px; }
.align { width: 367px; }
.number { width: 140px; }
.styles { width: 549px; }
.cells { width: 159px; }
.editing { width: 249px; }

.big {
    flex-direction: column;
    justify-content: flex-start;
    height: 72px;
    padding-top: 3px;
    line-height: 16px;
}

.big svg {
    margin-bottom: 2px;
}

.big > .caret {
    margin-top: 6px;
}

.big .line {
    display: flex;
    align-items: center;
    gap: 3px;
}

.paste { width: 53px; }
.cond { width: 108px; }
.table { width: 94px; }
.insert { width: 52px; }
.delete { width: 50px; }
.format { width: 48px; }
.sort { width: 70px; }
.find { width: 66px; }

.small-list {
    display: flex;
    flex-direction: column;
}

.editing .small-list {
    width: 104px;
}

.small {
    justify-content: flex-start;
    gap: 3px;
    height: 23px;
    padding-left: 3px;
}

.small.wide {
    height: 22px;
}

.rows {
    display: flex;
    flex-direction: column;
    gap: 9px;
    padding-top: 7px;
}

.row {
    display: flex;
    height: 22px;
}

.mini {
    width: 22px;
    height: 22px;
}

.mini.pressed {
    background-color: #c5c5c5;
}

.mini.grow {
    margin-left: 5px;
}

.mini.color {
    margin-left: 2px;
}

.drop {
    width: 10px;
}

.drop + .percent {
    margin-left: 2px;
}

.bold {
    font-size: 13px;
    font-weight: 700;
}

.italic {
    font-style: italic;
}

.underline {
    text-decoration: underline;
}

.percent {
    font-size: 16px;
}

.zeros {
    font-size: 9px;
}

.decimals {
    flex-direction: column;
    align-items: flex-end;
    padding-right: 4px;
    font-size: 8px;
    line-height: 8px;
}

.dec-row {
    display: flex;
    align-items: center;
}

.sep {
    width: 1px;
    margin: 0 4px 0 6px;
    background-color: #d2d2d2;
}

.sep.near {
    margin-left: 4px;
}

.sep.tall {
    height: 55px;
    margin: 6px 4px 0;
}

.combo {
    position: relative;
    display: block;
    height: 23px;
    border: 1px solid #c6c6c6;
    background-color: #fff;
    font-size: 12px;
}

.combo select {
    width: 100%;
    height: 21px;
    padding: 0 2px;
    background: none;
    appearance: none;
}

.combo .caret {
    position: absolute;
    top: 9px;
    right: 4px;
}

.family { width: 111px; }
.size { width: 43px; }
.combo.format { width: 131px; }

/* style gallery */
.gallery {
    display: flex;
    height: 62px;
    margin-top: 2px;
    border: 1px solid #ababab;
    background-color: #fff;
}

.swatches {
    display: grid;
    grid-template-columns: repeat(3, 100px);
    grid-template-rows: 22px 22px;
    gap: 6px;
    padding: 5px 4px 0 3px;
}

.swatch {
    justify-content: flex-start;
    padding-left: 4px;
    color: #000;
    font-size: 13px;
}

.swatch.normal { outline: 3px solid #c6c6c6; }
.swatch.neutral { background-color: #ffeb9c; color: #9c6500; }
.swatch.bad { background-color: #ffc7ce; color: #9c0006; }
.swatch.good { background-color: #c6efce; color: #006100; }
.swatch.input { border: 1px solid #7f7f7f; background-color: #ffcc99; color: #3f3f76; padding-left: 3px; }
.swatch.output { border: 1px solid #3f3f3f; background-color: #f2f2f2; color: #3f3f3f; padding-left: 3px; font-weight: 600; }

.gallery-scroll {
    display: flex;
    flex-direction: column;
    width: 15px;
    border-left: 1px solid #ababab;
}

.gallery-scroll button {
    flex: 1;
}

.gallery-scroll button + button {
    border-top: 1px solid #ababab;
}

.gallery-scroll .off {
    background-color: #e6e6e6;
    opacity: 0.6;
}

.gallery-scroll .more {
    flex-direction: column;
    gap: 3px;
}

.gallery-scroll .more::before {
    content: "";
    width: 7px;
    height: 1px;
    background-color: #666;
}

.collapse {
    align-self: flex-end;
    width: 16px;
    margin: 0 7px 5px auto;
}

/* formula bar */
.formula-bar {
    display: flex;
    height: 46px;
    flex: none;
    padding: 10px 5px;
}

.name-box {
    display: flex;
    align-items: center;
    width: 102px;
    padding-right: 6px;
    border: 1px solid #c6c6c6;
    background-color: #fff;
}

.name-box input {
    width: 0;
    flex: 1;
    padding: 0 6px;
    font-size: 13px;
}

.dots {
    width: 2px;
    height: 10px;
    margin: 8px 14px 0;
    background: repeating-linear-gradient(#aaa 0 2px, transparent 2px 4px);
}

.formula-buttons {
    display: flex;
    width: 110px;
    margin-right: 3px;
    border: 1px solid #c6c6c6;
    background-color: #fdfdfd;
}

.formula-buttons button {
    flex: 1;
}

.fx {
    color: #666;
    font-family: "Liberation Serif", serif;
    font-size: 16px;
    font-weight: 700;
}

.fx sub {
    font-size: 11px;
    font-style: italic;
}

.formula {
    display: flex;
    align-items: center;
    flex: 1;
    padding-right: 4px;
    border: 1px solid #c6c6c6;
    background-color: #fdfdfd;
}

.formula input {
    flex: 1;
    background: none;
}

/* sheet */
.workspace {
    display: flex;
    flex: 1;
    min-height: 0;
}

.sheet {
    position: relative;
    flex: 1;
    min-width: 0;
    overflow: hidden;
    border-right: 1px solid #999;
    border-bottom: 1px solid #999;
    background-color: #fff;
}

.grid {
    width: 1905px;
    border-spacing: 0;
    table-layout: fixed;
    color: #000;
    font-size: 13px;
}

.grid th {
    height: 20px;
    padding: 0;
    background-color: #e6e6e6;
    background-repeat: no-repeat;
    color: #222;
    font-weight: 400;
    line-height: 16px;
}

.grid thead th {
    padding-bottom: 1px;
    border-bottom: 1px solid #999;
    background-image: linear-gradient(#c8c8c8, #999);
    background-position: right;
    background-size: 1px 100%;
}

.grid tbody th {
    padding-bottom: 1px;
    border-right: 1px solid #999;
    background-image: linear-gradient(to right, #ccc, #999);
    background-position: bottom;
    background-size: 100% 1px;
    vertical-align: bottom;
}

.grid th.selected {
    background-color: #d2d2d2;
    color: #217346;
}

.grid thead th.selected {
    border-bottom: 2px solid #217346;
}

.grid tbody th.selected {
    border-right: 2px solid #217346;
}

.grid thead .corner {
    border-right: 1px solid #999;
    background-image: linear-gradient(135deg, transparent 50%, #b4b4b4 50%);
    background-position: 10px 4px;
    background-size: 12px 12px;
}

.grid td {
    padding: 0;
    border-right: 1px solid #d4d4d4;
    border-bottom: 1px solid #d4d4d4;
}

.grid td.boxed {
    border-color: #000;
    font-family: Lato, "Open Sans", sans-serif;
    font-size: 14px;
    font-weight: 700;
    line-height: 19px;
    text-align: center;
}

.grid td.date {
    font-size: 13px;
}

.grid td.cursor {
    position: relative;
}

.grid td.cursor::before {
    content: "";
    position: absolute;
    inset: -2px;
    border: 2px solid #217346;
}

.grid td.cursor::after {
    content: "";
    position: absolute;
    right: -3px;
    bottom: -3px;
    width: 6px;
    height: 6px;
    border: solid #fff;
    border-width: 1px 0 0 1px;
    background-color: #217346;
}

/* scanned table lying over the cells */
.picture {
    position: absolute;
    left: 658px;
    top: 103px;
    width: 290px;
    padding: 0 10px 5px;
    background-color: #fff;
}

.scraps {
    margin: 0 0 11px 30px;
}

.picture-page {
    filter: blur(0.4px);
}

.p-bar {
    height: 2px;
    background-color: #aab0ba;
}

.p-table {
    width: 100%;
    border-spacing: 0;
    table-layout: fixed;
    color: #222;
    font-family: "Liberation Serif", serif;
    font-size: 15px;
}

.p-table th {
    height: 20px;
    padding: 0;
    border-right: 1px solid #b0b6c0;
    border-bottom: 1px solid #c6cbd3;
    background-color: #dfe3ea;
    font-family: "Open Sans", sans-serif;
    font-size: 11px;
    font-weight: 400;
    line-height: 16px;
    vertical-align: bottom;
}

.p-table .p-head th {
    height: 17px;
    border-right-color: #ccd1d9;
    border-bottom-color: #aab0ba;
}

.p-table .p-head th:nth-child(1) { width: 22px; }
.p-table .p-head th:nth-child(2) { width: 171px; }
.p-table .p-head th:nth-child(3) { width: 73px; }

.corner-mark {
    display: block;
    width: 11px;
    height: 11px;
    margin: 0 0 2px 9px;
    background: linear-gradient(135deg, transparent 50%, #b5bac3 50%);
}

.p-table td {
    padding: 0 2px;
    border-right: 1px solid #ececf0;
    border-bottom: 1px solid #e2e4e8;
    line-height: 19px;
    text-shadow: 0 0 1px #777;
    vertical-align: bottom;
}

.p-table tr:nth-child(6) td {
    line-height: 20px;
}

.p-table .p-date {
    padding: 0 1px;
    text-align: right;
}

.p-table .p-last th {
    height: 7px;
}

/* scroll bars */
.vscroll {
    display: flex;
    flex-direction: column;
    width: 21px;
    flex: none;
    padding: 2px 3px 0;
}

.vscroll button,
.hscroll button {
    width: 15px;
    height: 15px;
    flex: none;
    border: 1px solid #ababab;
    background-color: #fff;
}

.track {
    display: flex;
    flex: 1;
    background-color: #dadada;
}

.thumb {
    border: 1px solid #ababab;
    background-color: #fff;
}

.vscroll .thumb {
    width: 15px;
    height: 97%;
}

.side {
    border: 4px solid transparent;
}

.side.left {
    border-left: none;
    border-right-color: #666;
}

.side.right {
    border-right: none;
    border-left-color: #666;
}

/* sheet tabs */
.sheet-tabs {
    display: flex;
    height: 28px;
    flex: none;
    border-bottom: 1px solid #c0c0c0;
}

.sheet-nav {
    display: flex;
    gap: 24px;
    width: 100px;
    height: 24px;
    padding-left: 27px;
    opacity: 0.3;
}

.sheet-tab {
    z-index: 1;
    width: 60px;
    height: 25px;
    margin-top: -1px;
    border: solid #999;
    border-width: 0 1px;
    box-shadow: inset 0 -2px #217346;
    background-color: #fff;
    color: #217346;
    font-size: 12px;
    font-weight: 700;
}

.add-sheet {
    height: 26px;
    margin-left: 32px;
}

.sheet-tabs .dots {
    margin: 8px 15px 0 auto;
}

.hscroll {
    display: flex;
    width: 38%;
    margin: 6px 21px 0 0;
}

.hscroll .thumb {
    width: 96%;
    height: 15px;
}

.hscroll .track {
    height: 15px;
}

/* status bar */
.status {
    display: flex;
    align-items: center;
    height: 21px;
    flex: none;
    padding: 0 8px;
    background-color: #f1f1f1;
    line-height: 18px;
}

.ready,
.percent-value {
    padding-bottom: 2px;
}

.ready {
    margin-right: auto;
}

.view {
    width: 38px;
    height: 21px;
}

.view.active {
    background-color: #c9c9c9;
}

.zoom-btn {
    width: 16px;
}

.zoom {
    width: 100px;
    height: 16px;
    margin: 0;
    background: linear-gradient(#ababab, #ababab) center / 100% 1px no-repeat;
    appearance: none;
}

.zoom::-webkit-slider-thumb {
    width: 4px;
    height: 11px;
    background-color: #666;
    appearance: none;
}

.percent-value {
    width: 39px;
    text-align: right;
}

/* taskbar */
.taskbar {
    display: flex;
    height: 40px;
    flex: none;
    background: linear-gradient(to right, #040d0e, #0b1313 25%, #17201f 45%, #1b2425 75%, #131c1d);
    color: #fff;
}

.task {
    width: 49px;
    height: 40px;
}

.task.open {
    background: linear-gradient(#7cb8f5, #7cb8f5) bottom / 40px 2px no-repeat;
}

.task.current {
    background: linear-gradient(#7cb8f5, #7cb8f5) bottom / 100% 2px no-repeat #414a4a;
}

.tray {
    display: flex;
    align-items: center;
    gap: 10px;
    margin-left: auto;
    margin-right: 4px;
    padding-right: 11px;
    border-right: 1px solid #5a6162;
}

.people {
    margin-right: 10px;
}

.lang {
    margin-right: 3px;
    font-size: 12px;
}

.clock {
    flex-direction: column;
    line-height: 18px;
}

.notify {
    margin: 4px 0 0 8px;
}
```
FILE: script.js
```js
// строки и столбцы листа
const letters = [];
for (let i = 0; i < 28; i++) {
    letters.push(i < 26 ? String.fromCharCode(65 + i) : 'A' + String.fromCharCode(65 + i - 26));
}

const cells = {
    B1: '31.12.2025',
    A2: 'текущая дата',
    A3: 'осталось дней',
    A4: 'день года',
    A5: 'порядковый<br>номер дня недели'
};
const widths = { A: 129, B: 86 };
const heights = { 2: 32, 3: 34, 4: 35, 5: 46 };

let html = '<colgroup><col style="width:26px">';
letters.forEach(l => html += `<col style="width:${widths[l] || 64}px">`);
html += '</colgroup><thead><tr><th class="corner"></th>';
letters.forEach(l => html += `<th${l === 'H' ? ' class="selected"' : ''}>${l}</th>`);
html += '</tr></thead><tbody>';

for (let r = 1; r <= 36; r++) {
    html += `<tr style="height:${heights[r] || 20}px"><th${r === 12 ? ' class="selected"' : ''}>${r < 36 ? r : ''}</th>`;
    letters.forEach(l => {
        let cls = '';
        if (r <= 5 && (l === 'A' || l === 'B')) cls = 'boxed';
        if (l + r === 'B1') cls = 'boxed date';
        if (l + r === 'H12') cls = 'cursor';
        html += `<td class="${cls}">${cells[l + r] || ''}</td>`;
    });
    html += '</tr>';
}
document.getElementById('grid').innerHTML = html + '</tbody>';
```
